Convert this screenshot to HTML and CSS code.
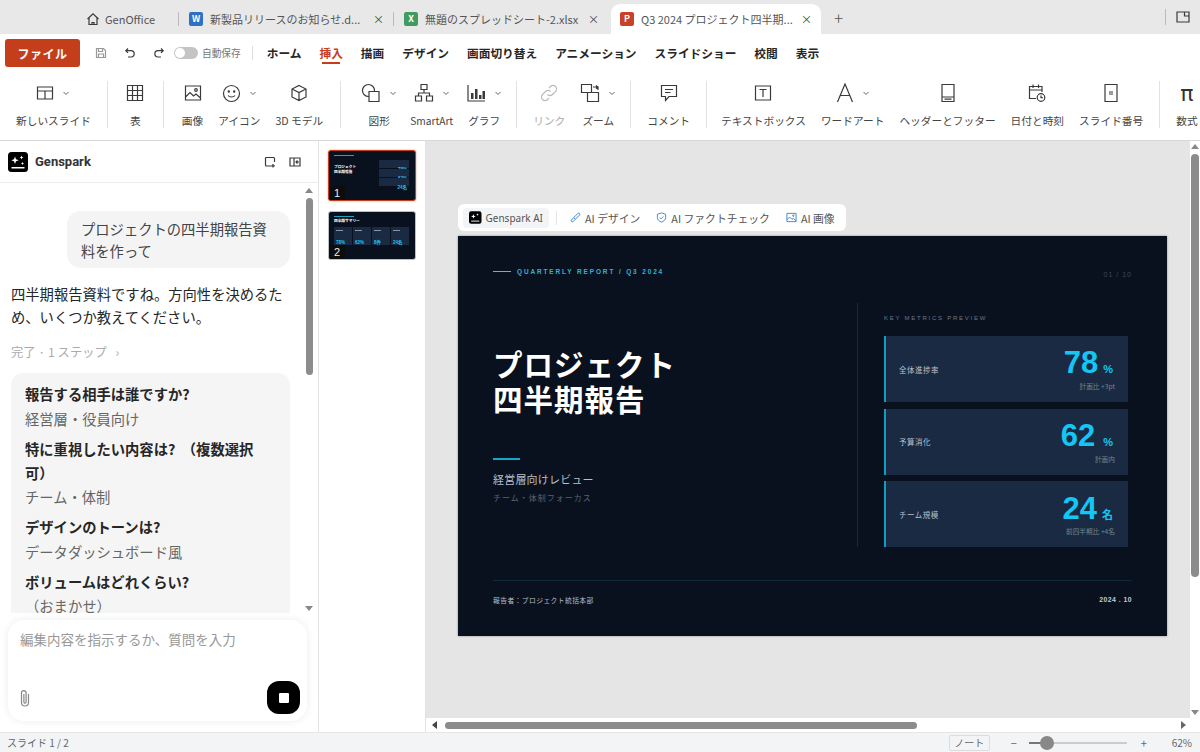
FILE: index.html
```html
<!DOCTYPE html>
<html lang="ja">

<head>
    <meta charset="UTF-8">
    <title>GenOffice</title>
    <link rel="stylesheet" href="styles.css">
</head>

<body>
    <!-- tabs -->
    <div class="tabbar">
        <div class="tab tab-home">
            <svg width="14" height="14" viewBox="0 0 14 14" class="line"><path d="M1.5 7 7 1.8 12.5 7M3 6v6.5h8V6"/><path d="M6 12.5v-2h2v2"/></svg>
            <span>GenOffice</span>
        </div>
        <div class="tab">
            <span class="badge badge-w">W</span>
            <span class="tab-name">新製品リリースのお知らせ.d...</span>
            <span class="tab-x">×</span>
        </div>
        <div class="tab">
            <span class="badge badge-x">X</span>
            <span class="tab-name">無題のスプレッドシート-2.xlsx</span>
            <span class="tab-x">×</span>
        </div>
        <div class="tab tab-active">
            <span class="badge badge-p">P</span>
            <span class="tab-name">Q3 2024 プロジェクト四半期...</span>
            <span class="tab-x">×</span>
        </div>
        <span class="tab-plus">+</span>
        <div class="tab-end">
            <svg width="16" height="14" viewBox="0 0 16 14" class="line"><path d="M2 2h12v10H2zM9.5 2v4h4.5"/></svg>
        </div>
    </div>

    <!-- menu -->
    <div class="menubar">
        <button class="file-btn">ファイル</button>
        <div class="quick">
            <svg width="12" height="12" viewBox="0 0 12 12" class="line faint"><path d="M1.5 1.5h7l2 2v7h-9zM3.5 1.5v3h4v-3M3.5 10.5v-3.500h5v3.500"/></svg>
            <svg width="12" height="12" viewBox="0 0 12 12" class="line"><path d="M4 1.500 1.800 3.700 4 5.900M2 3.700h5a3 3 0 0 1 0 6.300H4"/></svg>
            <svg width="12" height="12" viewBox="0 0 12 12" class="line"><path d="M8 1.500l2.200 2.200L8 5.900M10 3.700H5a3 3 0 0 0 0 6.300h3"/></svg>
        </div>
        <span class="toggle"><i></i></span>
        <span class="autosave">自動保存</span>
        <nav class="menu">
            <a>ホーム</a>
            <a class="on">挿入</a>
            <a>描画</a>
            <a>デザイン</a>
            <a>画面切り替え</a>
            <a>アニメーション</a>
            <a>スライドショー</a>
            <a>校閲</a>
            <a>表示</a>
        </nav>
    </div>

    <!-- ribbon -->
    <div class="ribbon">
        <div class="rgroup">
            <div class="ritem">
                <div class="ricon">
                    <svg width="18" height="18" viewBox="0 0 18 18" class="line"><path d="M1.500 3h15v12h-15zM1.500 7h15M9 7v8"/></svg>
                    <svg class="chev" width="8" height="8" viewBox="0 0 8 8"><path d="M1.500 3 4 5.500 6.500 3"/></svg>
                </div>
                <span>新しいスライド</span>
            </div>
        </div>
        <div class="rgroup rgroup-table">
            <div class="ritem">
                <div class="ricon">
                    <svg width="18" height="18" viewBox="0 0 18 18" class="line"><path d="M1.500 1.500h15v15h-15zM1.500 6.500h15M1.500 11.500h15M6.500 1.500v15M11.500 1.500v15"/></svg>
                </div>
                <span>表</span>
            </div>
        </div>
        <div class="rgroup rgroup-media">
            <div class="ritem">
                <div class="ricon">
                    <svg width="18" height="18" viewBox="0 0 18 18" class="line"><path d="M1.500 2h15v14h-15zM1.500 13l4.500-4.500 3.500 3.500 2.500-2 4.500 4"/><circle cx="12" cy="6" r="1.300"/></svg>
                </div>
                <span>画像</span>
            </div>
            <div class="ritem">
                <div class="ricon">
                    <svg width="19" height="19" viewBox="0 0 19 19" class="line"><circle cx="9.500" cy="9.500" r="8"/><path d="M6 11.500c1.500 2 5.500 2 7 0"/><circle cx="6.800" cy="7.500" r=".6"/><circle cx="12.200" cy="7.500" r=".6"/></svg>
                    <svg class="chev" width="8" height="8" viewBox="0 0 8 8"><path d="M1.500 3 4 5.500 6.500 3"/></svg>
                </div>
                <span>アイコン</span>
            </div>
            <div class="ritem">
                <div class="ricon">
                    <svg width="18" height="18" viewBox="0 0 18 18" class="line"><path d="M9 1.500l7 3.500v8l-7 3.500-7-3.500V5zM2 5l7 3.500L16 5M9 8.500v8"/></svg>
                </div>
                <span>3D モデル</span>
            </div>
        </div>
        <div class="rgroup rgroup-shape">
            <div class="ritem">
                <div class="ricon">
                    <svg width="20" height="20" viewBox="0 0 20 20" class="line"><circle cx="7.500" cy="7.500" r="6"/><path d="M8 8.500h10v10H8z" fill="#fff"/></svg>
                    <svg class="chev" width="8" height="8" viewBox="0 0 8 8"><path d="M1.500 3 4 5.500 6.500 3"/></svg>
                </div>
                <span>図形</span>
            </div>
            <div class="ritem">
                <div class="ricon">
                    <svg width="20" height="20" viewBox="0 0 20 20" class="line"><path d="M7 1.500h6v5H7zM1.500 13h6v5h-6zM12.500 13h6v5h-6zM10 6.500V10M4.500 13v-3h11v3"/></svg>
                    <svg class="chev" width="8" height="8" viewBox="0 0 8 8"><path d="M1.500 3 4 5.500 6.500 3"/></svg>
                </div>
                <span class="latin">SmartArt</span>
            </div>
            <div class="ritem">
                <div class="ricon">
                    <svg width="20" height="20" viewBox="0 0 20 20" class="line"><path d="M2 2v16h17"/><path class="solid" d="M5 10h2.500v6H5zM9 6h2.500v10H9zM13 12h2.500v4H13zM16.500 8H19v8h-2.500z"/></svg>
                    <svg class="chev" width="8" height="8" viewBox="0 0 8 8"><path d="M1.500 3 4 5.500 6.500 3"/></svg>
                </div>
                <span>グラフ</span>
            </div>
        </div>
        <div class="rgroup rgroup-link">
            <div class="ritem off">
                <div class="ricon">
                    <svg width="20" height="20" viewBox="0 0 20 20" class="line"><path d="M8.500 11.500a3.500 3.500 0 0 0 5 0l3-3a3.500 3.500 0 0 0-5-5l-1.500 1.500"/><path d="M11.500 8.500a3.500 3.500 0 0 0-5 0l-3 3a3.500 3.500 0 0 0 5 5l1.500-1.500"/></svg>
                </div>
                <span>リンク</span>
            </div>
            <div class="ritem">
                <div class="ricon">
                    <svg width="20" height="20" viewBox="0 0 20 20" class="line"><path d="M1.500 1.500h10v8h-10zM7.500 9.500h11v9h-11zM13 4h5v3M16 2.500 18 4l-2 1.500"/></svg>
                    <svg class="chev" width="8" height="8" viewBox="0 0 8 8"><path d="M1.500 3 4 5.500 6.500 3"/></svg>
                </div>
                <span>ズーム</span>
            </div>
        </div>
        <div class="rgroup">
            <div class="ritem">
                <div class="ricon">
                    <svg width="18" height="18" viewBox="0 0 18 18" class="line"><path d="M1.500 1.500h15v11H9l-3.500 4v-4h-4zM5 5.500h8M5 8.500h5.500"/></svg>
                </div>
                <span>コメント</span>
            </div>
        </div>
        <div class="rgroup rgroup-text">
            <div class="ritem">
                <div class="ricon">
                    <svg width="18" height="18" viewBox="0 0 18 18" class="line"><path d="M1.500 2h15v14h-15zM5.500 5.500h7M9 5.500v7.500"/></svg>
                </div>
                <span>テキストボックス</span>
            </div>
            <div class="ritem">
                <div class="ricon">
                    <svg width="18" height="20" viewBox="0 0 18 20" class="line"><path d="M1.500 19 9 1l7.500 18M4.500 12.500h9"/></svg>
                    <svg class="chev" width="8" height="8" viewBox="0 0 8 8"><path d="M1.500 3 4 5.500 6.500 3"/></svg>
                </div>
                <span>ワードアート</span>
            </div>
            <div class="ritem">
                <div class="ricon">
                    <svg width="16" height="20" viewBox="0 0 16 20" class="line"><path d="M2 1.500h12v17H2zM2 14h12M4.500 16.200h7"/></svg>
                </div>
                <span>ヘッダーとフッター</span>
            </div>
            <div class="ritem">
                <div class="ricon">
                    <svg width="18" height="20" viewBox="0 0 18 20" class="line"><path d="M8 15.500H1.500V3.500h12.500V9M1.500 7h12.500M5 1.500v3.500M10.500 1.500v3.500"/><circle cx="13" cy="14.500" r="3.800"/><path d="M13 12.500v2.200h1.800"/></svg>
                </div>
                <span>日付と時刻</span>
            </div>
            <div class="ritem">
                <div class="ricon">
                    <svg width="16" height="20" viewBox="0 0 16 20" class="line"><path d="M2 1.500h12v17H2zM6 9h4M6 11h4"/></svg>
                </div>
                <span>スライド番号</span>
            </div>
        </div>
        <div class="rgroup rgroup-last">
            <div class="ritem">
                <div class="ricon pi">π</div>
                <span>数式</span>
            </div>
        </div>
    </div>

    <div class="main">
        <!-- chat panel -->
        <aside class="chat">
            <div class="chat-head">
                <span class="logo"><svg width="20" height="20" viewBox="0 0 20 20"><rect width="20" height="20" rx="3.500"/><path class="spark" d="M7 4.500l1 2.700 2.700 1-2.700 1-1 2.700-1-2.700-2.700-1 2.700-1zM13.500 3.500l.6 1.400 1.400.6-1.400.6-.6 1.400-.6-1.400-1.400-.6 1.400-.6zM14.500 10l.5 1 1 .5-1 .5-.5 1-.5-1-1-.5 1-.5z"/><path class="spark" d="M3.500 15h13v1.500h-13z"/></svg></span>
                <b>Genspark</b>
                <svg class="line head-icon" width="12" height="12" viewBox="0 0 12 12"><path d="M7 10H2.500a1 1 0 0 1-1-1V2.500a1 1 0 0 1 1-1h7a1 1 0 0 1 1 1V6M9 8v3.500M7.200 9.800h3.600"/></svg>
                <svg class="line head-icon" width="12" height="12" viewBox="0 0 12 12"><path d="M1 2h10v8H1zM5 2v8M7 6h3M8.500 4.500 7 6l1.500 1.500"/></svg>
            </div>
            <div class="chat-body">
                <div class="chat-scroll">
                    <div class="bubble">プロジェクトの四半期報告資料を作って</div>
                    <p class="reply">四半期報告資料ですね。方向性を決めるため、いくつか教えてください。</p>
                    <p class="steps">完了 · 1 ステップ <i>›</i></p>
                    <div class="answers">
                        <b>報告する相手は誰ですか?</b>
                        <span>経営層・役員向け</span>
                        <b>特に重視したい内容は?&nbsp; （複数選択可）</b>
                        <span>チーム・体制</span>
                        <b>デザインのトーンは?</b>
                        <span>データダッシュボード風</span>
                        <b>ボリュームはどれくらい?</b>
                        <span>（おまかせ）</span>
                    </div>
                </div>
                <div class="vbar vbar-chat">
                    <span class="arrow up"></span>
                    <div class="track"><span class="thumb thumb-chat"></span></div>
                    <span class="arrow down"></span>
                </div>
            </div>
            <div class="prompt">
                <div class="prompt-text">編集内容を指示するか、質問を入力</div>
                <div class="prompt-foot">
                    <svg class="line clip" width="14" height="18" viewBox="0 0 14 18"><path d="M10.500 5v8.500a3.500 3.500 0 0 1-7 0V4a2.300 2.300 0 0 1 4.600 0v9a1.100 1.100 0 0 1-2.200 0V5"/></svg>
                    <span class="stop"><i></i></span>
                </div>
            </div>
        </aside>

        <!-- slide thumbs -->
        <div class="thumbs">
            <div class="thumb-slide picked">
                <div class="t-head"></div>
                <div class="t-split">
                    <div class="t-title">プロジェクト<br>四半期報告</div>
                    <div class="t-list">
                        <div><em>78%</em></div>
                        <div><em>62%</em></div>
                        <div><em>24名</em></div>
                    </div>
                </div>
                <span class="t-num">1</span>
            </div>
            <div class="thumb-slide second">
                <div class="t-head"></div>
                <div class="t-title t-title2">四半期サマリー</div>
                <div class="t-cols">
                    <div><em>78%</em></div>
                    <div><em>62%</em></div>
                    <div><em>8件</em></div>
                    <div><em>24名</em></div>
                </div>
                <span class="t-num">2</span>
            </div>
        </div>

        <!-- editor -->
        <div class="editor">
            <div class="editor-top">
                <div class="stage">
                    <div class="ai-bar">
                        <span class="ai-main">
                            <svg width="13" height="13" viewBox="0 0 20 20"><rect width="20" height="20" rx="3.500"/><path class="spark" d="M7 4.500l1 2.700 2.700 1-2.700 1-1 2.700-1-2.700-2.700-1 2.700-1zM13.500 3.500l.6 1.400 1.400.6-1.400.6-.6 1.400-.6-1.400-1.400-.6 1.400-.6z"/><path class="spark" d="M3.500 15h13v1.500h-13z"/></svg>
                            Genspark AI
                        </span>
                        <span class="ai-sep"></span>
                        <span class="ai-link">
                            <svg class="blue" width="11" height="11" viewBox="0 0 12 12"><path d="M10.500 1.500a1.300 1.300 0 0 0-1.800 0L4 6.200 5.800 8l4.700-4.700a1.300 1.300 0 0 0 0-1.800zM4 6.200 1.500 8.700a1.300 1.300 0 0 0 1.800 1.800L5.800 8"/></svg>
                            AI デザイン
                        </span>
                        <span class="ai-link">
                            <svg class="blue" width="11" height="11" viewBox="0 0 12 12"><path d="M6 1 10.500 2.500V6c0 2.500-2 4.200-4.500 5C3.500 10.200 1.500 8.500 1.500 6V2.500zM4 6l1.500 1.500L8 4.800"/></svg>
                            AI ファクトチェック
                        </span>
                        <span class="ai-link">
                            <svg class="blue" width="11" height="11" viewBox="0 0 12 12"><path d="M1 1.500h10v9H1zM1 8.500l3-3 2.500 2.500 1.500-1 3 2.500"/><circle cx="8" cy="4" r=".8"/></svg>
                            AI 画像
                        </span>
                    </div>

                    <section class="slide">
                        <header class="slide-top">
                            <span class="eyebrow-line"></span>
                            <span class="eyebrow">QUARTERLY REPORT / Q3 2024</span>
                            <span class="page-no">01 / 10</span>
                        </header>
                        <div class="slide-mid">
                            <div class="slide-left">
                                <h1>プロジェクト<br>四半期報告</h1>
                                <span class="accent"></span>
                                <p class="sub">経営層向けレビュー</p>
                                <p class="sub2">チーム・体制フォーカス</p>
                            </div>
                            <div class="slide-right">
                                <p class="metrics-label">KEY METRICS PREVIEW</p>
                                <div class="metric">
                                    <span class="metric-name">全体進捗率</span>
                                    <div class="metric-val">
                                        <div class="val"><b>78</b><small>%</small></div>
                                        <span class="note">計画比 +3pt</span>
                                    </div>
                                </div>
                                <div class="metric">
                                    <span class="metric-name">予算消化</span>
                                    <div class="metric-val">
                                        <div class="val val-wide"><b>62</b><small>%</small></div>
                                        <span class="note">計画内</span>
                                    </div>
                                </div>
                                <div class="metric">
                                    <span class="metric-name">チーム規模</span>
                                    <div class="metric-val">
                                        <div class="val val-name"><b>24</b><small>名</small></div>
                                        <span class="note">前四半期比 +4名</span>
                                    </div>
                                </div>
                            </div>
                        </div>
                        <footer class="slide-foot">
                            <span>報告者：プロジェクト統括本部</span>
                            <span class="foot-date">2024 . 10</span>
                        </footer>
                    </section>
                </div>
                <div class="vbar vbar-main">
                    <span class="arrow up"></span>
                    <div class="track"><span class="thumb thumb-main"></span></div>
                    <span class="arrow down"></span>
                </div>
            </div>
            <div class="hbar">
                <span class="arrow left"></span>
                <div class="htrack"><span class="hthumb"></span></div>
                <span class="arrow right"></span>
            </div>
        </div>
    </div>

    <!-- status -->
    <div class="status">
        <span>スライド 1 / 2</span>
        <div class="status-right">
            <span class="note-btn">ノート</span>
            <span class="zoom-sign">−</span>
            <span class="slider"><i></i></span>
            <span class="zoom-sign">+</span>
            <span class="zoom-pct">62%</span>
        </div>
    </div>
</body>

</html>
```

FILE: styles.css
```css
* {
    box-sizing: border-box;
}

html,
body {
    margin: 0;
    padding: 0;
    height: 100%;
    overflow: hidden;
}

body {
    display: flex;
    flex-direction: column;
    height: 752px;
    font-family: "Noto Sans CJK JP", "Noto Sans", sans-serif;
    color: #333;
    background: #fff;
}

p,
h1 {
    margin: 0;
}

.line {
    fill: none;
    stroke: #3a3a3a;
    stroke-width: 1.2;
    flex: none;
}

.line.faint {
    stroke: #999;
}

.line .solid {
    fill: #3a3a3a;
    stroke: none;
}

/* tabs */
.tabbar {
    display: flex;
    align-items: flex-end;
    height: 34px;
    padding-left: 80px;
    background: #e8e8e8;
    font-size: 11px;
    color: #555;
}

.tab {
    display: flex;
    align-items: center;
    gap: 7px;
    width: 215px;
    height: 30px;
    padding: 0 10px;
    position: relative;
    white-space: nowrap;
}

.tab::after {
    content: "";
    position: absolute;
    right: 0;
    top: 8px;
    height: 14px;
    width: 1px;
    background: #bbb;
}

.tab-home {
    width: 99px;
    padding-left: 6px;
    gap: 5px;
}

.tab-active {
    width: 210px;
    margin-left: 2px;
    padding: 0 9px;
    background: #fff;
    border-radius: 9px 9px 0 0;
}

.tab-active::after {
    display: none;
}

.tab:nth-child(3)::after {
    display: none;
}

.tab-name {
    flex: 1;
}

.tab-x {
    width: 8px;
    margin-right: 3px;
    font-size: 11px;
    color: #444;
}

.badge {
    flex: none;
    width: 14px;
    height: 14px;
    border-radius: 2px;
    color: #fff;
    font-size: 9px;
    font-weight: 700;
    line-height: 14px;
    text-align: center;
}

.badge-w {
    background: #2f6fc4;
}

.badge-x {
    background: #3f9b62;
}

.badge-p {
    background: #cb4128;
}

.tab-plus {
    align-self: center;
    margin-left: 13px;
    font-size: 17px;
    color: #555;
    font-weight: 300;
}

.tab-end {
    margin-left: auto;
    align-self: center;
    display: flex;
    align-items: center;
    height: 16px;
    padding-left: 9px;
    margin-right: 9px;
    border-left: 1px solid #bbb;
}

/* menu row */
.menubar {
    display: flex;
    align-items: center;
    height: 38px;
    padding-left: 5px;
}

.file-btn {
    width: 75px;
    height: 28px;
    border: 0;
    border-radius: 3px;
    background: #c43e1c;
    color: #fff;
    font-family: inherit;
    font-size: 12px;
    font-weight: 700;
    letter-spacing: .5px;
}

.quick {
    display: flex;
    gap: 17px;
    margin-left: 15px;
}

.toggle {
    width: 24px;
    height: 12px;
    margin-left: 9px;
    border-radius: 6px;
    background: #c4c4c4;
    padding: 1px;
}

.toggle i {
    display: block;
    width: 10px;
    height: 10px;
    border-radius: 50%;
    background: #fff;
}

.autosave {
    margin-left: 4px;
    padding-right: 11px;
    border-right: 1px solid #ddd;
    font-size: 9.7px;
    color: #777;
}

.menu {
    display: flex;
    gap: 18px;
    margin-left: 14px;
    margin-bottom: 1px;
    font-size: 11.7px;
    font-weight: 700;
    color: #262626;
}

.menu a {
    position: relative;
}

.menu .on {
    color: #c43e1c;
}

.menu .on::after {
    content: "";
    position: absolute;
    left: 3px;
    right: 3px;
    bottom: -3px;
    height: 2px;
    background: #c43e1c;
}

/* ribbon */
.ribbon {
    display: flex;
    height: 69px;
    padding-top: 9px;
    border-bottom: 1px solid #d8d8d8;
    overflow: hidden;
}

.rgroup {
    display: flex;
    flex: none;
    gap: 15px;
    height: 47px;
    padding: 0 16px;
    border-right: 1px solid #e2e2e2;
}

.rgroup-table {
    width: 56px;
    justify-content: center;
}

.rgroup-media {
    padding: 0 17px 0 18px;
}

.rgroup-shape {
    gap: 13px;
    padding: 0 14px 0 20px;
}

.rgroup-link {
    padding-right: 14px;
}

.rgroup-text {
    padding-left: 14px;
}

.rgroup-last {
    border-right: 0;
}

.ritem {
    display: flex;
    flex-direction: column;
    align-items: center;
    justify-content: space-between;
    font-size: 10.7px;
    color: #444;
    white-space: nowrap;
}

.ritem .latin {
    font-size: 10.2px;
}

.ritem.off {
    color: #aaa;
}

.ritem.off .line {
    stroke: #bbb;
}

.ricon {
    display: flex;
    align-items: center;
    justify-content: center;
    gap: 8px;
    height: 24px;
}

.chev {
    fill: none;
    stroke: #666;
    stroke-width: 1;
}

.pi {
    font-family: "DejaVu Sans", sans-serif;
    font-size: 22px;
    color: #333;
}

/* main */
.main {
    display: flex;
    flex: 1;
    min-height: 0;
}

.chat {
    display: flex;
    flex-direction: column;
    width: 319px;
    flex: none;
    border-right: 1px solid #e3e3e3;
}

.chat-head {
    display: flex;
    align-items: center;
    height: 42px;
    padding: 0 17px 0 8px;
    border-bottom: 1px solid #ececec;
}

.chat-head b {
    margin-left: 7px;
    margin-right: auto;
    font-family: "Roboto", sans-serif;
    font-size: 13px;
    color: #333;
}

.head-icon {
    margin-left: 13px;
}

.logo {
    display: flex;
}

.spark {
    fill: #fff;
}

.chat-body {
    display: flex;
    height: 430px;
    flex: none;
}

.chat-scroll {
    flex: 1;
    padding: 28px 15px 0 11px;
    overflow: hidden;
    font-size: 14.3px;
    line-height: 23px;
}

.bubble {
    width: 223px;
    margin-left: 56px;
    padding: 7px 14px;
    border-radius: 14px;
    background: #f4f4f4;
    line-height: 21.5px;
    color: #444;
}

.reply {
    margin-top: 14px;
    color: #262626;
}

.steps {
    margin-top: 13px;
    font-size: 12.3px;
    color: #aaa;
}

.steps i {
    margin-left: 6px;
    font-style: normal;
}

.answers {
    display: flex;
    flex-direction: column;
    width: 279px;
    margin-top: 9px;
    padding: 9px 30px 40px 14px;
    border-radius: 12px;
    background: #f5f5f5;
    line-height: 24px;
}

.answers b {
    color: #262626;
}

.answers span {
    margin-top: .5px;
    margin-bottom: 6px;
    color: #666;
}

.vbar {
    display: flex;
    flex-direction: column;
    align-items: center;
    flex: none;
}

.vbar-chat {
    width: 12px;
    margin-right: 3px;
    padding: 5px 0 2px;
}

.track {
    flex: 1;
    width: 100%;
    display: flex;
    justify-content: center;
}

.thumb {
    display: block;
    width: 7px;
    border-radius: 4px;
    background: #8c8c8c;
}

.thumb-chat {
    height: 177px;
    margin-top: 5px;
}

.arrow {
    width: 0;
    height: 0;
    flex: none;
    border: 4px solid transparent;
}

.arrow.up {
    border-top: 0;
    border-bottom: 5px solid #888;
}

.arrow.down {
    border-bottom: 0;
    border-top: 5px solid #888;
}

.arrow.left {
    border-left: 0;
    border-right: 5px solid #444;
}

.arrow.right {
    border-right: 0;
    border-left: 5px solid #666;
}

.prompt {
    display: flex;
    flex-direction: column;
    justify-content: space-between;
    height: 101px;
    margin: 7px 11px 0 8px;
    padding: 9px 7px 7px 12px;
    border-radius: 16px;
    background: #fff;
    box-shadow: 0 0 8px rgba(0, 0, 0, .08);
}

.prompt-text {
    font-size: 13.5px;
    color: #999;
}

.prompt-foot {
    display: flex;
    align-items: center;
    justify-content: space-between;
}

.clip {
    stroke: #888;
    margin-left: -2px;
}

.stop {
    display: flex;
    align-items: center;
    justify-content: center;
    width: 33px;
    height: 33px;
    border-radius: 12px;
    background: #000;
}

.stop i {
    width: 10px;
    height: 10px;
    border-radius: 1px;
    background: #fff;
}

/* thumbnails */
.thumbs {
    display: flex;
    flex-direction: column;
    gap: 10px;
    width: 107px;
    flex: none;
    padding: 9px 0 0 9px;
    border-right: 1px solid #e3e3e3;
}

.thumb-slide {
    position: relative;
    width: 88px;
    height: 51px;
    padding: 4px 5px 0;
    border: 1px solid #b9c0c8;
    border-radius: 3px;
    background: #0a111e;
    overflow: hidden;
    color: #fff;
}

.thumb-slide.second {
    height: 49px;
}

.thumb-slide.picked {
    border: 1.5px solid #c43e1c;
    box-shadow: 0 0 2px rgba(196, 62, 28, .6);
}

.t-head {
    width: 20px;
    height: 1px;
    background: #2a9ec0;
}

.t-split {
    display: flex;
    justify-content: space-between;
    margin-top: 4px;
    padding-right: 1px;
}

.t-title {
    margin-top: 5px;
    font-size: 3.7px;
    font-weight: 700;
    line-height: 4.8px;
}

.t-title2 {
    margin-top: 2px;
}

.t-list {
    display: flex;
    flex-direction: column;
    gap: 1px;
    width: 30px;
}

.t-list div {
    height: 8px;
    padding-right: 2px;
    background: #1a2a42;
    text-align: right;
    line-height: 8px;
}

em {
    font-style: normal;
    font-weight: 700;
    font-family: "Liberation Sans", "Noto Sans CJK JP", sans-serif;
    color: #22c4f0;
}

.t-list em {
    font-size: 4.500px;
}

.t-cols {
    display: grid;
    grid-template-columns: repeat(4, 1fr);
    gap: 1px;
    margin-top: 3px;
    padding-right: 1px;
}

.t-cols div {
    position: relative;
    height: 18px;
    padding: 8px 0 0 2px;
    background: #1a2a42;
    line-height: 5px;
}

.t-cols div::before {
    content: "";
    position: absolute;
    left: 2px;
    top: 3px;
    width: 7px;
    height: 1px;
    background: #8a94a2;
}

.t-cols em {
    font-size: 4.500px;
}

.t-num {
    position: absolute;
    left: 0;
    bottom: 0;
    width: 16px;
    height: 14px;
    background: #0d0d0d;
    font-family: "Liberation Sans", sans-serif;
    font-size: 11px;
    line-height: 14px;
    text-align: center;
    color: #eee;
}

/* editor */
.editor {
    display: flex;
    flex-direction: column;
    flex: 1;
    min-width: 0;
}

.editor-top {
    display: flex;
    flex: 1;
    min-height: 0;
    background: #e5e5e5;
}

.stage {
    flex: 1;
    padding: 63px 0 0 32px;
}

.vbar-main {
    width: 10px;
    padding: 3px 0 3px;
    background: #fff;
}

.thumb-main {
    height: 423px;
    margin-top: 5px;
    width: 8px;
}

.hbar {
    display: flex;
    align-items: center;
    height: 14px;
    padding: 0 14px 0 6px;
    background: #fff;
}

.htrack {
    flex: 1;
    padding: 0 8px;
}

.hthumb {
    display: block;
    width: 472px;
    height: 7px;
    border-radius: 4px;
    background: #8c8c8c;
}

.ai-bar {
    display: flex;
    align-items: center;
    gap: 16px;
    width: 388px;
    height: 27px;
    padding: 0 5px;
    border-radius: 6px;
    background: #fff;
    font-size: 10.8px;
    color: #555;
    white-space: nowrap;
}

.ai-main {
    display: flex;
    align-items: center;
    gap: 4px;
    width: 86px;
    height: 20px;
    padding: 0 6px;
    border-radius: 4px;
    background: #f3f4f6;
    font-family: "Noto Sans", sans-serif;
    font-size: 10px;
}

.ai-sep {
    width: 1px;
    height: 14px;
    margin-left: -9px;
    margin-right: -3px;
    background: #e5e5e5;
}

.ai-link {
    display: flex;
    align-items: center;
    gap: 4px;
}

.blue {
    fill: none;
    stroke: #3b82c4;
    stroke-width: 1;
}

/* slide */
.slide {
    display: flex;
    flex-direction: column;
    width: 709px;
    height: 400px;
    margin-top: 5px;
    padding: 0 35px;
    background: #0a111e;
    box-shadow: 0 0 2px rgba(0, 0, 0, .4);
}

.slide-top {
    display: flex;
    align-items: center;
    height: 67px;
    padding-top: 3px;
    font-family: "Liberation Sans", sans-serif;
}

.eyebrow-line {
    width: 18px;
    height: 1px;
    margin-right: 6px;
    background: #35c5ee;
}

.eyebrow {
    font-size: 6.500px;
    font-weight: 700;
    letter-spacing: 1.85px;
    color: #30b2da;
}

.page-no {
    margin-left: auto;
    padding-top: 6px;
    font-size: 7px;
    letter-spacing: 1px;
    color: #3c4858;
}

.slide-mid {
    display: flex;
    height: 244px;
}

.slide-left {
    display: flex;
    flex-direction: column;
    align-items: flex-start;
    width: 365px;
    padding-top: 43px;
    border-right: 1px solid #1a2738;
}

h1 {
    font-size: 29.500px;
    font-weight: 700;
    line-height: 35px;
    letter-spacing: 1px;
    color: #fff;
}

.accent {
    width: 27px;
    height: 2px;
    margin-top: 42px;
    background: #1aa4c8;
}

.sub {
    margin-top: 11px;
    font-size: 11px;
    line-height: 16px;
    letter-spacing: .2px;
    color: #b6bfca;
}

.sub2 {
    margin-top: 5px;
    font-size: 8px;
    line-height: 12px;
    letter-spacing: 1px;
    color: #566478;
}

.slide-right {
    flex: 1;
    padding-left: 26px;
    width: 0;
}

.metrics-label {
    height: 33px;
    padding-top: 11px;
    font-family: "Liberation Sans", sans-serif;
    font-size: 6px;
    line-height: 8px;
    letter-spacing: 1.750px;
    color: #6b7888;
}

.metric {
    display: flex;
    align-items: center;
    justify-content: space-between;
    width: 244px;
    height: 66px;
    margin-bottom: 6.500px;
    padding: 0 13px 0 13px;
    border-left: 2px solid #0e9ec4;
    background: #1a2a42;
}

.metric-name {
    font-size: 7.500px;
    letter-spacing: .5px;
    color: #b6c0cc;
}

.metric-val {
    display: flex;
    flex-direction: column;
    align-items: flex-end;
}

.val {
    display: flex;
    align-items: baseline;
    gap: 5px;
    margin-right: 2px;
    padding-top: 2px;
    font-family: "Liberation Sans", sans-serif;
    line-height: 27px;
    color: #14c6f6;
}

.val b {
    font-size: 31px;
}

.val small {
    font-size: 11px;
    font-weight: 700;
}

.val-wide b {
    margin-right: 3px;
}

.val-name small {
    font-family: "Noto Sans CJK JP", sans-serif;
}

.note {
    margin-top: -2px;
    font-size: 6.700px;
    line-height: 10px;
    color: #74828f;
}

.slide-foot {
    display: flex;
    justify-content: space-between;
    align-items: center;
    height: 42px;
    margin-top: 33px;
    padding-bottom: 4px;
    border-top: 1px solid #12293c;
    font-size: 6.800px;
    letter-spacing: .4px;
    color: #b6bfca;
}

.foot-date {
    font-family: "Liberation Sans", sans-serif;
    font-weight: 700;
    letter-spacing: .5px;
    color: #c2cad2;
}

/* status */
.status {
    display: flex;
    align-items: center;
    justify-content: space-between;
    height: 20px;
    padding: 0 8px 0 7px;
    border-top: 1px solid #e6e6e6;
    background: #f3f4f6;
    font-size: 10px;
    color: #666;
}

.status-right {
    display: flex;
    align-items: center;
}

.note-btn {
    width: 41px;
    height: 16px;
    margin-right: 19px;
    border: 1px solid #dcdcdc;
    border-radius: 2px;
    line-height: 14px;
    text-align: center;
}

.zoom-sign {
    width: 10px;
    text-align: center;
    font-size: 11px;
}

.slider {
    position: relative;
    width: 98px;
    height: 2px;
    margin: 0 12px 0 10px;
    background: #ccc;
}

.slider::before {
    content: "";
    position: absolute;
    left: 0;
    top: 0;
    width: 17px;
    height: 2px;
    background: #777;
}

.slider i {
    position: absolute;
    left: 11px;
    top: -6px;
    width: 14px;
    height: 14px;
    border-radius: 50%;
    background: #888;
}

.zoom-pct {
    margin-left: 23px;
}
```
